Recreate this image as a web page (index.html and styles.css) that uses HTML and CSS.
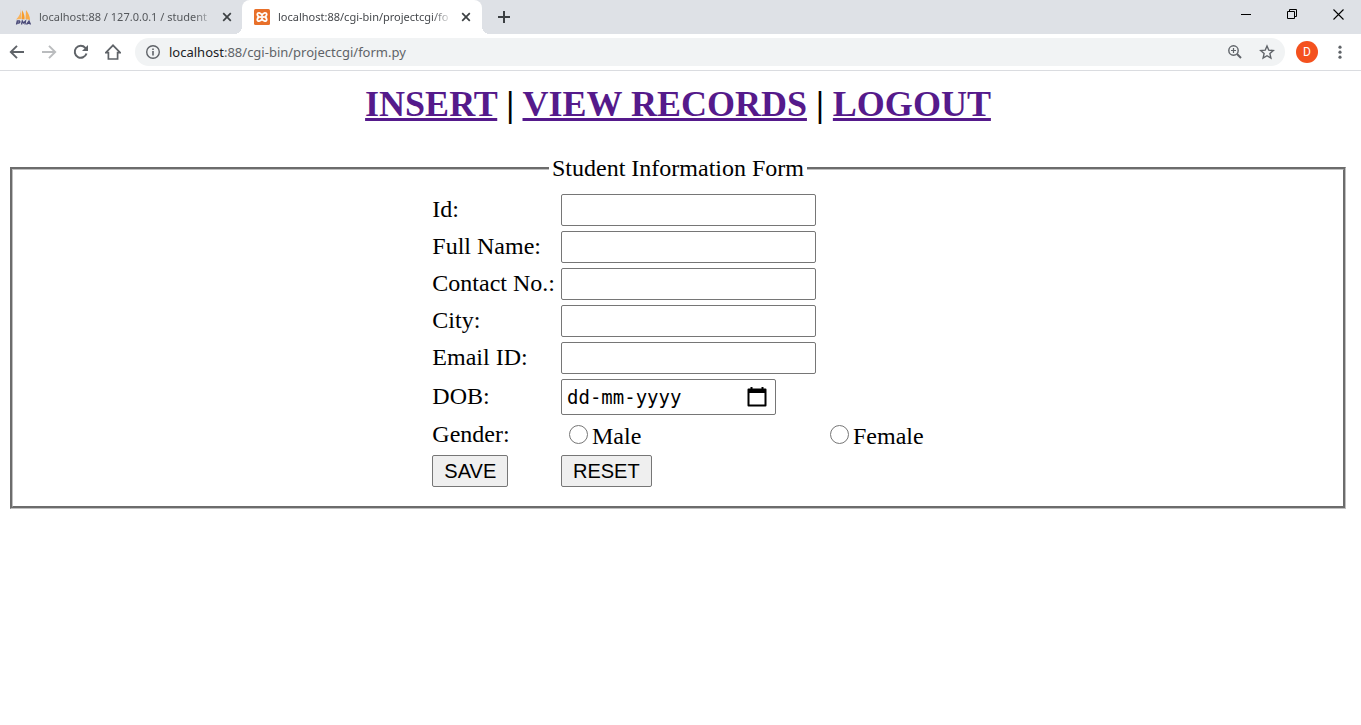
FILE: index.html
```html
<!DOCTYPE html>
<html lang="en">
<head>
<meta charset="utf-8">
<title>Student Information Form</title>
<link rel="stylesheet" href="styles.css">
</head>
<body>
<header class="browser">
  <div class="tabstrip">
    <div class="tab">
      <svg class="favicon" width="18" height="18" viewBox="0 0 18 18" aria-hidden="true">
        <path d="M7 1C7 5 5 9 2 11.500L7 11Z" fill="#f9b35c"/><path d="M8 2C10 5 11 9 10.500 11.500L7.500 11Z" fill="#f89c2a"/><path d="M12 2C14.500 5 16 9 16 12L11.500 11Z" fill="#f9ab48"/>
        <path d="M2.500 16.500L3.300 13H5.500Q6.500 14 5 15H3M7.500 16.500L8.300 13L9.500 15L11.500 13L11 16.500M12.500 16.500L15 13L16.500 16.500M13.500 15.300H16" fill="none" stroke="#4a4a78" stroke-width="1.300"/>
      </svg>
      <span class="tab-title">localhost:88 / 127.0.0.1 / student</span>
      <button class="icon-button tab-close" aria-label="Close tab"><svg width="10" height="10" viewBox="0 0 10 10"><path d="M1.200 1.200L8.800 8.800M8.800 1.200L1.200 8.800" stroke="#3c4043" stroke-width="1.700"/></svg></button>
    </div>
    <div class="tab tab-active">
      <svg class="favicon" width="16" height="16" viewBox="0 0 16 16" aria-hidden="true">
        <rect width="16" height="16" rx="1.500" fill="#e8702a"/>
        <path d="M8 6.300C6.800 3.200 3.300 3 3.300 5.600C3.300 7 4.200 7.400 5.200 8C4.200 8.600 3.300 9 3.300 10.400C3.300 13 6.800 12.800 8 9.700C9.200 12.800 12.700 13 12.700 10.400C12.700 9 11.800 8.600 10.800 8C11.800 7.400 12.700 7 12.700 5.600C12.700 3 9.200 3.200 8 6.300Z" fill="none" stroke="#fff" stroke-width="1.800" stroke-linejoin="round"/><path d="M6 8H10" stroke="#fff" stroke-width="1.800"/>
      </svg>
      <span class="tab-title">localhost:88/cgi-bin/projectcgi/fo</span>
      <button class="icon-button tab-close" aria-label="Close tab"><svg width="10" height="10" viewBox="0 0 10 10"><path d="M1.200 1.200L8.800 8.800M8.800 1.200L1.200 8.800" stroke="#3c4043" stroke-width="1.700"/></svg></button>
    </div>
    <button class="icon-button new-tab" aria-label="New tab"><svg width="12" height="12" viewBox="0 0 12 12"><path d="M6 0V12M0 6H12" stroke="#3c4043" stroke-width="2"/></svg></button>
    <div class="window-controls">
      <button class="icon-button window-button" aria-label="Minimize"><svg width="11" height="11" viewBox="0 0 11 11"><path d="M0 5.500H10" stroke="#000"/></svg></button>
      <button class="icon-button window-button" aria-label="Restore"><svg width="11" height="11" viewBox="0 0 11 11"><path d="M.5 2.500H7.500V9.500H.5ZM2.500 2.500V.5H9.500V7.500H7.500" fill="none" stroke="#000"/></svg></button>
      <button class="icon-button window-button" aria-label="Close"><svg width="11" height="11" viewBox="0 0 11 11"><path d="M.5 .5L10.500 10.500M10.500 .5L.5 10.500" stroke="#000" stroke-width="1.100"/></svg></button>
    </div>
  </div>
  <div class="toolbar">
    <button class="icon-button" aria-label="Back"><svg width="16" height="16" viewBox="0 0 16 16"><path d="M15 8H2.500M8 1.800L1.800 8L8 14.200" fill="none" stroke="#5f6368" stroke-width="1.900"/></svg></button>
    <button class="icon-button" aria-label="Forward"><svg width="16" height="16" viewBox="0 0 16 16"><path d="M1 8H13.500M8 1.800L14.200 8L8 14.200" fill="none" stroke="#babcbe" stroke-width="1.900"/></svg></button>
    <button class="icon-button" aria-label="Reload"><svg width="16" height="16" viewBox="0 0 16 16"><path d="M13.500 9.500A6 6 0 1 1 12.300 3.800L14 5.500" fill="none" stroke="#5f6368" stroke-width="2"/><path d="M15 1V7H9Z" fill="#5f6368"/></svg></button>
    <button class="icon-button" aria-label="Home"><svg width="16" height="16" viewBox="0 0 16 16"><path d="M.8 8.600H3.400V15H12.600V8.600H15.200L8 1.300Z" fill="none" stroke="#5f6368" stroke-width="1.700"/></svg></button>
    <div class="omnibox">
      <svg width="16" height="16" viewBox="0 0 16 16" aria-hidden="true"><circle cx="8" cy="8" r="6.300" fill="none" stroke="#5f6368" stroke-width="1.400"/><path d="M8 7V11.500M8 4.500V6" stroke="#5f6368" stroke-width="1.600"/></svg>
      <span class="url"><span class="host">localhost</span>:88/cgi-bin/projectcgi/form.py</span>
      <button class="icon-button" aria-label="Zoom"><svg width="16" height="16" viewBox="0 0 16 16"><circle cx="6.500" cy="6.500" r="4.700" fill="none" stroke="#5f6368" stroke-width="1.400"/><path d="M6.500 4V9M4 6.500H9" stroke="#5f6368" stroke-width="1.200"/><path d="M10 10L14 14" stroke="#5f6368" stroke-width="1.900"/></svg></button>
      <button class="icon-button" aria-label="Bookmark"><svg width="16" height="16" viewBox="0 0 16 16"><path d="M8 2L9.800 6.200L14.300 6.600L10.900 9.600L11.900 14L8 11.700L4.100 14L5.100 9.600L1.700 6.600L6.200 6.200Z" fill="none" stroke="#5f6368" stroke-width="1.400"/></svg></button>
    </div>
    <button class="avatar" aria-label="Profile D">D</button>
    <button class="icon-button" aria-label="Menu"><svg width="16" height="16" viewBox="0 0 16 16" fill="#5f6368"><circle cx="8" cy="3.200" r="1.600"/><circle cx="8" cy="8.200" r="1.600"/><circle cx="8" cy="13.200" r="1.600"/></svg></button>
  </div>
</header>
<main class="page">
  <h1 class="menu"><a href="#insert">INSERT</a> | <a href="#records">VIEW RECORDS</a> | <a href="#logout">LOGOUT</a></h1>
  <form>
    <fieldset class="student">
      <legend>Student Information Form</legend>
      <div class="fields">
        <label class="name" for="id">Id:</label><input class="field" id="id" type="text">
        <label class="name" for="name">Full Name:</label><input class="field" id="name" type="text">
        <label class="name" for="contact">Contact No.:</label><input class="field" id="contact" type="text">
        <label class="name" for="city">City:</label><input class="field" id="city" type="text">
        <label class="name" for="email">Email ID:</label><input class="field" id="email" type="text">
        <label class="name" for="dob">DOB:</label>
        <div class="date">
          <input class="date-input" id="dob" type="text" placeholder="dd-mm-yyyy">
          <button class="icon-button" type="button" aria-label="Pick a date"><svg width="20" height="22" viewBox="0 0 20 22"><path d="M1.500 3.500H18.500V19.500H1.500Z" fill="none" stroke="#000" stroke-width="2" stroke-linejoin="round"/><path d="M1 3H19V7H1ZM3.500 1H5.500V4H3.500ZM14.500 1H16.500V4H14.500Z"/></svg></button>
        </div>
        <span class="name">Gender:</span>
        <label class="choice" for="male"><input class="radio" id="male" name="gender" type="radio">Male</label>
        <label class="choice" for="female"><input class="radio" id="female" name="gender" type="radio">Female</label>
        <button class="action" type="button">SAVE</button>
        <button class="action" type="reset">RESET</button>
      </div>
    </fieldset>
  </form>
</main>
</body>
</html>
```
FILE: styles.css
```css
* { box-sizing: border-box; }
body {
  margin: 0;
  background: #fff;
  color: #000;
  font-family: "Liberation Serif", "Times New Roman", serif;
  font-size: 24px;
  line-height: 27px;
}
svg { display: block; flex: none; }
.icon-button {
  display: flex;
  align-items: center;
  justify-content: center;
  flex: none;
  padding: 0;
  border: 0;
  background: none;
}
.browser { font-family: "Noto Sans", "Open Sans", sans-serif; font-size: 12px; line-height: 16px; }
.tabstrip { display: flex; height: 34px; background: #dee1e6; }
.tab {
  display: flex;
  align-items: center;
  width: 242px;
  padding: 0 10px 0 14px;
  gap: 7px;
  color: #54575b;
}
.tab-active {
  position: relative;
  width: 240px;
  padding-right: 11px;
  padding-left: 12px;
  gap: 8px;
  border-radius: 8px 8px 0 0;
  background: #fff;
  color: #45484c;
}
.tab-active::before,
.tab-active::after {
  content: "";
  position: absolute;
  bottom: 0;
  width: 8px;
  height: 8px;
}
.tab-active::before { right: 100%; background: radial-gradient(circle at 0 0, #dee1e6 8px, #fff 8px); }
.tab-active::after { left: 100%; background: radial-gradient(circle at 100% 0, #dee1e6 8px, #fff 8px); }
.tab-title {
  flex: 1;
  white-space: nowrap;
  font-size: 11px;
  mask-image: linear-gradient(to right, #000 88%, transparent);
}
.tab-close { width: 10px; }
.new-tab { width: 44px; }
.window-controls { display: flex; margin-left: auto; padding-bottom: 5px; }
.window-button { width: 46px; }
.toolbar {
  display: flex;
  align-items: center;
  height: 37px;
  padding: 0 13px 0 9px;
  gap: 16px;
  border-bottom: 1px solid #dadce0;
}
.omnibox {
  display: flex;
  flex: 1;
  align-items: center;
  height: 28px;
  margin: 0 -5px 0 -2px;
  padding: 0 10px;
  border-radius: 14px;
  background: #f1f3f4;
  gap: 16px;
}
.url { flex: 1; margin-left: -8px; color: #5f6368; font-size: 13px; }
.host { color: #202124; }
.avatar {
  width: 22px;
  height: 22px;
  margin-right: -2px;
  padding: 0;
  border: 0;
  border-radius: 50%;
  background: #f4511e;
  color: #fff;
  font-family: Roboto, sans-serif;
  font-size: 12px;
}
.page { padding: 13px 15px 0 10px; }
.menu { margin: 0 0 30px; text-align: center; font-size: 36px; line-height: 41px; }
.menu a { color: #551a8b; text-decoration-thickness: 3px; }
.student {
  min-width: 0;
  margin: 0;
  padding: 12px 16px 19px;
  border: 3px groove #c0c0c0;
}
.student legend { margin: 0 auto; padding: 0 3px; }
.fields {
  display: grid;
  grid-template-columns: auto auto auto;
  justify-content: center;
  align-items: center;
  gap: 5px 6px;
}
.field {
  grid-column: 2;
  width: 255px;
  height: 32px;
  padding: 2px 3px;
  border: 1px solid #767676;
  border-radius: 2px;
  font: 20px "Liberation Sans", Arial, sans-serif;
}
.date {
  grid-column: 2;
  display: flex;
  align-items: center;
  justify-content: space-between;
  width: 215px;
  height: 36px;
  padding: 0 8px 0 5px;
  border: 1px solid #767676;
  border-radius: 2px;
}
.date-input {
  width: 150px;
  padding: 0;
  border: 0;
  outline: 0;
  background: none;
  font: 19px "DejaVu Sans Mono", monospace;
}
.date-input::placeholder { color: #000; opacity: 1; }
.name { grid-column: 1; padding-bottom: 2px; }
.choice { display: flex; align-items: center; height: 30px; padding: 2px 0 0 8px; }
.radio { width: 19px; height: 19px; margin: 0 4px 4px 0; }
.action {
  justify-self: start;
  height: 32px;
  padding: 0 11px;
  border: 1px solid #767676;
  border-radius: 2px;
  background: #efefef;
  color: #000;
  font: 20px "Liberation Sans", Arial, sans-serif;
}
```
